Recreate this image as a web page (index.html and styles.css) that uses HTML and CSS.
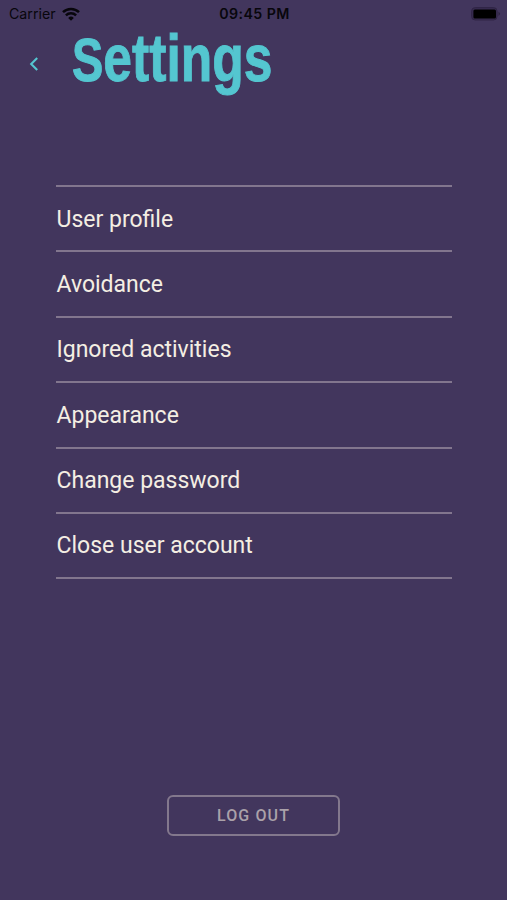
FILE: index.html
```html
<!DOCTYPE html>
<html lang="en">
<head>
<meta charset="utf-8">
<title>Settings</title>
<link rel="stylesheet" href="styles.css">
</head>
<body>
<div class="screen">
  <div class="status">
    <div class="carrier"><span>Carrier</span>
      <svg width="18" height="14" viewBox="0 0 18 14" fill="none" stroke="#08060c" stroke-width="2.5"><path d="M1 5.2a11.4 11.4 0 0 1 16 0M3.9 8.3a7.3 7.3 0 0 1 10.2 0"/><path d="M9 13.7 6.2 10.9a4 4 0 0 1 5.6 0z" fill="#08060c" stroke="none"/></svg>
    </div>
    <div class="time">09:45 PM</div>
    <svg class="battery" width="30" height="14" viewBox="0 0 30 14"><rect x=".6" y=".6" width="25.5" height="12.4" rx="3.6" fill="#382c50" stroke="#302546"/><rect x="2.4" y="2.4" width="22.6" height="9" rx="1.5" fill="#000"/><path d="M27.5 4.7q3 2.1 0 4.3z" fill="#2d2341"/></svg>
  </div>
  <header class="header">
    <svg class="back" width="10" height="16" viewBox="0 0 10 16" fill="none" stroke="#54c6d0" stroke-width="2.1"><path d="M8.2 2 2.2 8l6 6"/></svg>
    <h1 class="title"><span class="initial">S</span>ettings</h1>
  </header>
  <ul class="menu">
    <li>User profile</li>
    <li>Avoidance</li>
    <li>Ignored activities</li>
    <li>Appearance</li>
    <li>Change password</li>
    <li>Close user account</li>
  </ul>
  <button class="logout">LOG OUT</button>
</div>
</body>
</html>
```
FILE: styles.css
```css
* { box-sizing: border-box; }
body { margin: 0; background: #42365d; }
.screen {
  width: 507px;
  height: 900px;
  overflow: hidden;
  display: flex;
  flex-direction: column;
  font-family: Roboto, sans-serif;
}
.status {
  height: 27px;
  padding: 0 6px 0 9px;
  display: grid;
  grid-template-columns: 1fr auto 1fr;
  align-items: center;
  font-family: Inter, sans-serif;
  font-size: 14.2px;
  color: #08060c;
}
.carrier { display: flex; align-items: center; gap: 6px; }
.time { font-weight: 600; letter-spacing: .4px; margin-left: -1px; }
.battery { justify-self: end; }
.header {
  height: 158px;
  padding-left: 29px;
  display: flex;
  align-items: flex-start;
}
.back { margin-top: 29px; }
.title {
  margin: 1px 0 0 33px;
  font-family: "Liberation Sans", sans-serif;
  font-size: 67px;
  line-height: 60px;
  font-weight: 700;
  color: #54c6d0;
  -webkit-text-stroke: 1px #54c6d0;
  transform: scaleX(.77);
  transform-origin: 0 0;
  white-space: nowrap;
}
.initial { font-size: 61px; }
.menu {
  margin: 0 55px 0 56px;
  padding: 0;
  list-style: none;
  border-top: 2px solid #82768e;
}
.menu li {
  height: 65.4px;
  padding: .7px 0 0 .5px;
  display: flex;
  align-items: center;
  border-bottom: 2px solid #82768e;
  font-size: 23px;
  color: #f4eee3;
}
.logout {
  margin: 216px 0 0 167px;
  width: 173px;
  height: 41px;
  padding: 0 0 1px;
  border: 2px solid #83788d;
  border-radius: 6px;
  background: transparent;
  color: #aaa1a9;
  font: 500 16px Roboto, sans-serif;
  letter-spacing: 1.1px;
}
```
